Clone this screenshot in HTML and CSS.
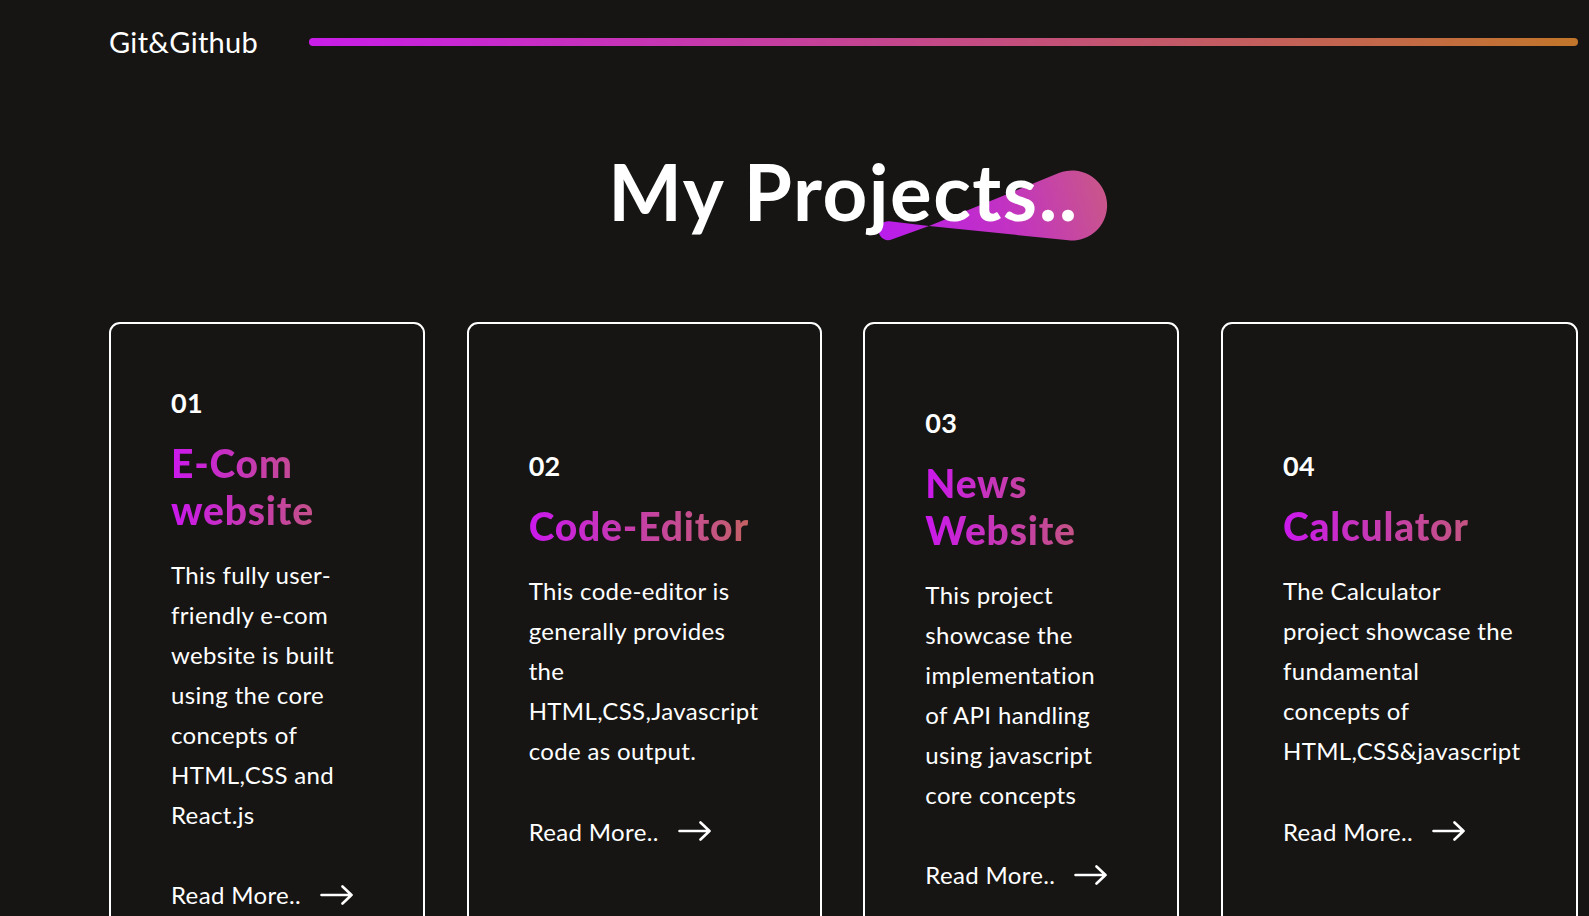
FILE: index.html
```html
<!DOCTYPE html>
<html lang="en">
<head>
<meta charset="utf-8">
<title>My Projects</title>
<link rel="stylesheet" href="styles.css">
</head>
<body>
<main class="page">
  <div class="skill-row">
    <span class="skill-name">Git&amp;Github</span>
    <span class="skill-bar"></span>
  </div>

  <h2 class="section-title">
    <span class="title-wrap">
      <svg class="blob" width="232" height="76" viewBox="0 0 232 76" aria-hidden="true">
        <defs>
          <linearGradient id="blobGrad" gradientUnits="userSpaceOnUse" x1="10" y1="72" x2="222" y2="4">
            <stop offset="0" stop-color="#b91de9"/>
            <stop offset="0.55" stop-color="#c232c2"/>
            <stop offset="1" stop-color="#c9568a"/>
          </linearGradient>
        </defs>
        <path d="M52 58 L12.4 53.3 A9.5 9.5 0 1 0 14.55 71.6 Z" fill="url(#blobGrad)"/>
        <path d="M52 58 L181.8 5.1 A35 35 0 1 1 191.5 72.3 Z" fill="url(#blobGrad)"/>
      </svg>
      <span class="title-text">My Projects..</span>
    </span>
  </h2>

  <section class="cards">
    <article class="card card-a">
      <div class="card-num">01</div>
      <h3 class="card-title">E-Com<br>website</h3>
      <p class="card-desc">This fully user-<br>friendly e-com<br>website is built<br>using the core<br>concepts of<br>HTML,CSS and<br>React.js</p>
      <a class="read-more" href="#">Read More..
        <svg class="arrow" width="34" height="20" viewBox="0 0 34 20" aria-hidden="true"><path d="M1.5 10 H31.5 M22.5 1.5 L31.5 10 L22.5 18.5" fill="none" stroke="#fff" stroke-width="2.6" stroke-linecap="round" stroke-linejoin="round"/></svg>
      </a>
    </article>

    <article class="card card-b">
      <div class="card-num">02</div>
      <h3 class="card-title">Code-Editor</h3>
      <p class="card-desc">This code-editor is<br>generally provides<br>the<br>HTML,CSS,Javascript<br>code as output.</p>
      <a class="read-more" href="#">Read More..
        <svg class="arrow" width="34" height="20" viewBox="0 0 34 20" aria-hidden="true"><path d="M1.5 10 H31.5 M22.5 1.5 L31.5 10 L22.5 18.5" fill="none" stroke="#fff" stroke-width="2.6" stroke-linecap="round" stroke-linejoin="round"/></svg>
      </a>
    </article>

    <article class="card card-c">
      <div class="card-num">03</div>
      <h3 class="card-title">News<br>Website</h3>
      <p class="card-desc">This project<br>showcase the<br>implementation<br>of API handling<br>using javascript<br>core concepts</p>
      <a class="read-more" href="#">Read More..
        <svg class="arrow" width="34" height="20" viewBox="0 0 34 20" aria-hidden="true"><path d="M1.5 10 H31.5 M22.5 1.5 L31.5 10 L22.5 18.5" fill="none" stroke="#fff" stroke-width="2.6" stroke-linecap="round" stroke-linejoin="round"/></svg>
      </a>
    </article>

    <article class="card card-d">
      <div class="card-num">04</div>
      <h3 class="card-title">Calculator</h3>
      <p class="card-desc">The Calculator<br>project showcase the<br>fundamental<br>concepts of<br>HTML,CSS&amp;javascript</p>
      <a class="read-more" href="#">Read More..
        <svg class="arrow" width="34" height="20" viewBox="0 0 34 20" aria-hidden="true"><path d="M1.5 10 H31.5 M22.5 1.5 L31.5 10 L22.5 18.5" fill="none" stroke="#fff" stroke-width="2.6" stroke-linecap="round" stroke-linejoin="round"/></svg>
      </a>
    </article>
  </section>
</main>
</body>
</html>
```

FILE: styles.css
```css
* { box-sizing: border-box; }

html, body {
  margin: 0;
  padding: 0;
  background: #161514;
  color: #ffffff;
  font-family: "Lato", "Noto Sans", sans-serif;
  overflow: hidden;
}

.page {
  padding: 0 11px 0 109px;
}

/* skill row */
.skill-row {
  display: flex;
  align-items: center;
  height: 41px;
  margin-top: 21px;
}

.skill-name {
  flex: none;
  width: 200px;
  font-size: 29px;
  line-height: 41px;
  font-weight: 400;
  letter-spacing: 0.3px;
  white-space: nowrap;
}

.skill-bar {
  flex: 1;
  height: 8px;
  border-radius: 4px;
  background: linear-gradient(90deg, #c91de9 0%, #c4458f 45%, #c35f5c 75%, #c2762a 100%);
}

/* heading */
.section-title {
  margin: 82px 0 0;
  text-align: center;
  font-size: 78px;
  line-height: 94px;
  font-weight: 700;
  letter-spacing: 1.5px;
  height: 94px;
}

.title-wrap {
  position: relative;
  display: inline-block;
  isolation: isolate;
}

.title-text {
  position: relative;
  z-index: 1;
}

.blob {
  position: absolute;
  right: -30px;
  top: 24px;
  z-index: 0;
}

/* cards */
.cards {
  display: flex;
  gap: 41.67px;
  margin-top: 84px;
  align-items: stretch;
}

.card {
  flex: none;
  height: 657px;
  border: 2px solid #ffffff;
  border-radius: 11px;
  padding: 0 20px 0 60px;
  display: flex;
  flex-direction: column;
  justify-content: center;
}

.card-a { width: 316px; }
.card-b { width: 355px; }
.card-c { width: 316px; }
.card-d { width: 357px; }

.card-num {
  font-size: 27px;
  line-height: 32px;
  font-weight: 700;
  letter-spacing: 0.3px;
}

.card-title {
  margin: 21px 0 0;
  font-size: 39px;
  line-height: 47px;
  font-weight: 900;
  letter-spacing: 0.8px;
  white-space: nowrap;
  background: linear-gradient(90deg, #cb18ed 0%, #c53fa6 40%, #c4567f 70%, #c2752f 100%);
  -webkit-background-clip: text;
  background-clip: text;
  color: transparent;
}

.card-desc {
  margin: 21px 0 0;
  font-size: 24px;
  line-height: 40px;
  letter-spacing: 0.35px;
  white-space: nowrap;
}

.read-more {
  margin-top: 40px;
  display: flex;
  align-items: center;
  gap: 19px;
  height: 40px;
  font-size: 24px;
  letter-spacing: 0.35px;
  color: #ffffff;
  text-decoration: none;
  white-space: nowrap;
}

.arrow {
  flex: none;
  display: block;
}
```
